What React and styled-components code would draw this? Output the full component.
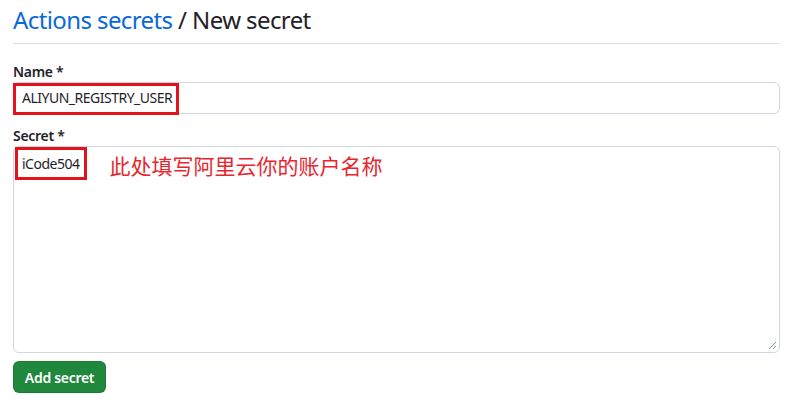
import styled, { createGlobalStyle } from 'styled-components'

const GlobalStyle = createGlobalStyle`
  body {
    margin: 0;
    background: #ffffff;
    font-family: "Noto Sans", "Open Sans", "Noto Sans CJK SC", sans-serif;
    color: #1f2328;
  }
`

function App() {
  return (
    <Page>
      <GlobalStyle />
      <Header>
        <Title>
          <Crumb>Actions secrets</Crumb> / New secret
        </Title>
      </Header>
      <Form>
        <Label>Name *</Label>
        <InputBox>
          <Value>ALIYUN_REGISTRY_USER</Value>
          <Highlight $left={-1} $top={0} $width={166} $height={32} />
        </InputBox>
        <Label>Secret *</Label>
        <TextArea>
          <Value>iCode504</Value>
          <Note>此处填写阿里云你的账户名称</Note>
          <Highlight $left={1} $top={0} $width={72} $height={33} />
          <Grip viewBox="0 0 10 10">
            <path d="M9 2 L2 9 M9 6 L6 9" stroke="#8c959f" strokeWidth="1" fill="none" />
          </Grip>
        </TextArea>
        <Button>Add secret</Button>
      </Form>
    </Page>
  )
}

const Page = styled.div`
  padding: 0 8px 0 13px;
  width: 788px;
  height: 412px;
  box-sizing: border-box;
  overflow: hidden;
`

const Header = styled.div`
  height: 44px;
  border-bottom: 1px solid #d8dee4;
  display: flex;
  align-items: center;
  box-sizing: border-box;
  padding-bottom: 4px;
`

const Title = styled.h2`
  margin: 0;
  font-size: 24px;
  font-weight: 400;
  line-height: 1.25;
  letter-spacing: -0.6px;
  color: #1f2328;
`

const Crumb = styled.span`
  color: #0969da;
`

const Form = styled.div`
  display: flex;
  flex-direction: column;
  align-items: flex-start;
  padding-top: 17px;
`

const Label = styled.div`
  font-size: 14px;
  font-weight: 600;
  line-height: 21px;
  letter-spacing: -0.3px;
`

const InputBox = styled.div`
  position: relative;
  width: 100%;
  height: 32px;
  border: 1px solid #d0d7de;
  border-radius: 6px;
  box-sizing: border-box;
  display: flex;
  align-items: center;
  padding-left: 8px;
  margin-bottom: 11px;
`

const TextArea = styled.div`
  position: relative;
  width: 100%;
  height: 207px;
  border: 1px solid #d0d7de;
  border-radius: 6px;
  box-sizing: border-box;
  display: flex;
  align-items: flex-start;
  padding: 7px 0 0 8px;
  margin-bottom: 8px;
`

const Value = styled.span`
  font-size: 14px;
  line-height: 20px;
  letter-spacing: -0.5px;
  color: #1f2328;
`

const Note = styled.span`
  margin-left: 30px;
  margin-top: -3px;
  font-family: "Noto Sans CJK SC", sans-serif;
  font-size: 21px;
  line-height: 28px;
  letter-spacing: 0;
  color: #e8262e;
`

const Highlight = styled.span`
  position: absolute;
  left: ${p => p.$left}px;
  top: ${p => p.$top}px;
  width: ${p => p.$width}px;
  height: ${p => p.$height}px;
  border: 3px solid #e3131c;
  box-sizing: border-box;
`

const Grip = styled.svg`
  position: absolute;
  right: 2px;
  bottom: 2px;
  width: 10px;
  height: 10px;
`

const Button = styled.button`
  background: #1f883d;
  color: #ffffff;
  border: 1px solid rgba(31, 35, 40, 0.15);
  border-radius: 6px;
  height: 32px;
  width: 93px;
  font-family: "Noto Sans", "Open Sans", sans-serif;
  font-size: 14px;
  font-weight: 600;
  letter-spacing: -0.3px;
  padding: 0;
  cursor: pointer;
`

export default App
